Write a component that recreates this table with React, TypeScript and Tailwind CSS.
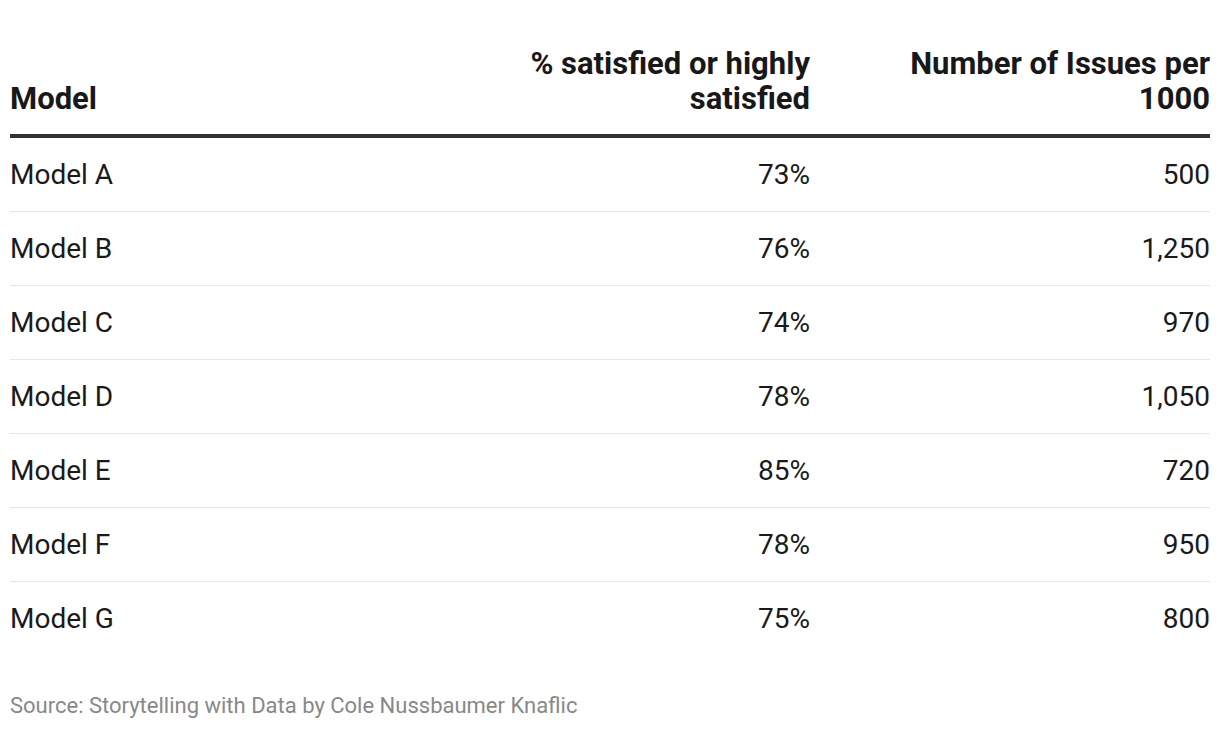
import React from "react";

const rows = [
  { model: "Model A", pct: "73%", issues: "500" },
  { model: "Model B", pct: "76%", issues: "1,250" },
  { model: "Model C", pct: "74%", issues: "970" },
  { model: "Model D", pct: "78%", issues: "1,050" },
  { model: "Model E", pct: "85%", issues: "720" },
  { model: "Model F", pct: "78%", issues: "950" },
  { model: "Model G", pct: "75%", issues: "800" },
];

const App: React.FC = () => {
  return (
    <div
      className="w-[1220px] h-[730px] bg-white px-[10px] pt-[46px] text-[#1a1a1a]"
      style={{ fontFamily: "Roboto, 'Liberation Sans', sans-serif" }}
    >
      {/* header */}
      <div className="grid grid-cols-[1fr_300px_400px] items-end border-b-4 border-[#333333] pb-[18px] text-[31px] font-bold leading-[35px] text-[#181818]">
        <div>Model</div>
        <div className="text-right">% satisfied or highly satisfied</div>
        <div className="flex justify-end">
          <div className="w-[320px] text-right">Number of Issues per 1000</div>
        </div>
      </div>

      {rows.map((r, i) => (
        <div
          key={r.model}
          className={
            "grid h-[74px] grid-cols-[1fr_300px_400px] items-center text-[28px] " +
            (i < rows.length - 1 ? "border-b border-[#e6e6e6]" : "")
          }
        >
          <div>{r.model}</div>
          <div className="text-right">{r.pct}</div>
          <div className="text-right">{r.issues}</div>
        </div>
      ))}

      <div className="mt-[36px] text-[22px] leading-[28px] text-[#888888]">
        Source: Storytelling with Data by Cole Nussbaumer Knaflic
      </div>
    </div>
  );
};

export default App;
